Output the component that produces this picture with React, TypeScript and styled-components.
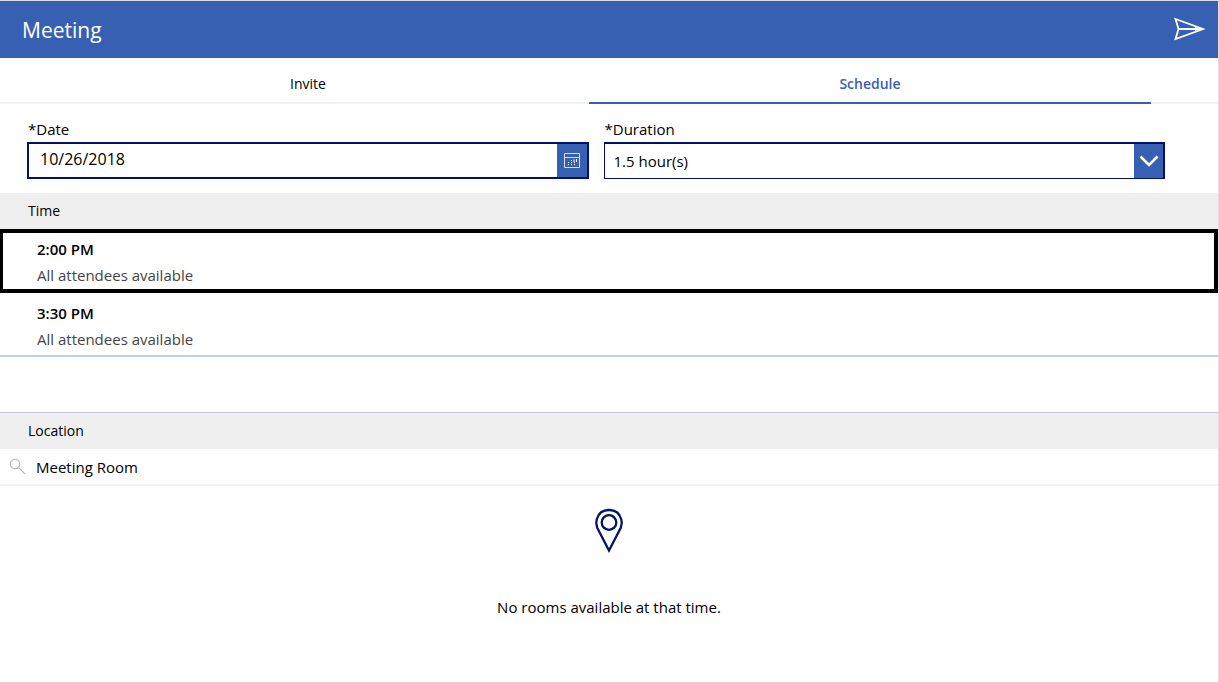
import React, { useState } from 'react';
import styled, { createGlobalStyle } from 'styled-components';

const blue = '#3860b2';
const navy = '#00126b';
const pale = '#efefef';

const GlobalStyle = createGlobalStyle`
  * { box-sizing: border-box; }
  body {
    margin: 0;
    background: #fff;
    color: #000;
    font: 14px/20px "Open Sans", "Noto Sans", sans-serif;
  }
  button, input, select { font: inherit; color: inherit; margin: 0; }
`;

const Screen = styled.main`
  min-height: 100vh;
  border-top: 1px solid #dedede;
  border-right: 1px solid #dedede;
`;

const Header = styled.header`
  display: flex;
  align-items: center;
  justify-content: space-between;
  height: 57px;
  padding: 0 12px 2px 22px;
  background: ${blue};
  color: #fff;
`;

const Title = styled.h1`
  margin: 0;
  font-size: 21px;
  line-height: 28px;
  font-weight: 400;
  padding-top: 2px;
`;

const IconButton = styled.button`
  display: flex;
  padding: 0;
  border: 0;
  background: none;
  color: #fff;
  cursor: pointer;
`;

const Tabs = styled.div`
  display: grid;
  grid-template-columns: 1fr 1fr;
  height: 46px;
  padding: 0 67px 0 27px;
  box-shadow: inset 0 -2px #f2f2f2;
`;

const Tab = styled.button<{ $active: boolean }>`
  padding: 8px 0 0;
  border: 0;
  border-bottom: 2px solid ${p => (p.$active ? blue : 'transparent')};
  background: none;
  color: ${p => (p.$active ? blue : '#000')};
  font-weight: ${p => (p.$active ? 600 : 400)};
  cursor: pointer;
`;

const Fields = styled.div`
  display: grid;
  grid-template-columns: 1fr 1fr;
  gap: 15px;
  padding: 15px 53px 14px 27px;
`;

const Field = styled.div`
  display: flex;
  flex-direction: column;
  gap: 3px;
`;

const Label = styled.label`
  padding-left: 1px;
  font-size: 15px;
`;

const Control = styled.div<{ $thin?: boolean }>`
  display: flex;
  height: 37px;
  border: 2px solid ${navy};
  border-width: ${p => (p.$thin ? '2px 2px 1px 1px' : '2px')};
`;

const DateInput = styled.input`
  flex: 1;
  min-width: 0;
  padding: 0 11px 4px;
  border: 0;
  outline: 0;
  font-size: 16px;
`;

const CalendarButton = styled(IconButton)`
  width: 30px;
  align-items: center;
  justify-content: center;
  background: ${blue};
`;

const SelectBox = styled.div`
  display: grid;
  flex: 1;
  grid-template-columns: 1fr 29px;
`;

const Select = styled.select`
  grid-area: 1 / 1 / 2 / 3;
  padding: 0 40px 0 9px;
  border: 0;
  outline: 0;
  appearance: none;
  background: transparent;
  font-size: 15px;
`;

const Arrow = styled.span`
  display: flex;
  grid-area: 1 / 2;
  align-items: center;
  justify-content: center;
  background: ${blue};
  pointer-events: none;
`;

const SectionTitle = styled.h2<{ $ruled?: boolean }>`
  margin: 0;
  padding: 8px 28px;
  border-top: ${p => (p.$ruled ? '1px solid #c5c5dc' : '0')};
  background: ${pale};
  font-size: 14px;
  font-weight: 400;
`;

const Times = styled.div`
  min-height: 183px;
`;

const Slot = styled.button<{ $selected: boolean }>`
  display: flex;
  flex-direction: column;
  justify-content: center;
  gap: 6px;
  width: 100%;
  height: 64px;
  padding: 2px 34px 0;
  border: solid ${p => (p.$selected ? '#000' : 'transparent')};
  border-width: 4px 4px 4px 3px;
  background: #fff;
  font-size: 15px;
  text-align: left;
  cursor: pointer;
`;

const SlotItem = styled.div`
  & + & { border-bottom: 2px solid #c0cfe6; height: 64px; overflow: hidden; }
`;

const SlotTime = styled.span`
  font-weight: 600;
`;

const SlotNote = styled.span`
  color: #444;
`;

const SearchBar = styled.label`
  display: flex;
  align-items: center;
  gap: 10px;
  height: 37px;
  padding-left: 9px;
  border-bottom: 2px solid #f2f2f2;
`;

const SearchInput = styled.input`
  flex: 1;
  padding: 0;
  border: 0;
  outline: 0;
  font-size: 15px;
`;

const Empty = styled.section`
  display: flex;
  flex-direction: column;
  align-items: center;
  gap: 43px;
  padding: 22px 0;
`;

const EmptyText = styled.p`
  margin: 0;
  font-size: 15px;
`;

const SendIcon = () => (
  <svg width="33" height="24" viewBox="0 0 33 24" fill="none" stroke="currentColor" strokeWidth="1.8">
    <path d="M2.500 2 30 12 2.500 22 5.500 12Z M5.500 12H30" />
    <path d="M22 10 31 12 22 14Z" fill="currentColor" stroke="none" />
  </svg>
);

const CalendarIcon = () => (
  <svg width="16" height="15" viewBox="0 0 16 15" fill="none" stroke="#d5dff2">
    <path d="M.5 .5H15.5V14.5H.5Z M.5 4.5H15.5" />
    <path d="M7 7.5H8 M10 6.500V9 M12.500 6V9 M4 9.5H5 M7 9.5H8 M10 9.5H11 M4 11.5H5 M7 11.5H8 M10 11.5H11" stroke="#fff" />
  </svg>
);

const ChevronIcon = () => (
  <svg width="20" height="12" viewBox="0 0 20 12" fill="none" stroke="#fff" strokeWidth="2.6">
    <path d="M1.5 1.5 10 10 18.5 1.5" />
  </svg>
);

const SearchIcon = () => (
  <svg width="17" height="17" viewBox="0 0 17 17" fill="none" stroke="#bdbdbd" strokeWidth="1.2">
    <circle cx="6" cy="6" r="4.8" />
    <path d="M9.3 9.300 16 16" />
  </svg>
);

const PinIcon = () => (
  <svg width="30" height="46" viewBox="0 0 30 46" fill="none" stroke={navy} strokeWidth="2.3">
    <path d="M15 42.500 3.200 19.800C2 17 2 13.500 2.800 11.200 4.400 5.300 9 2 15 2S25.600 5.300 27.200 11.200C28 13.500 28 17 26.800 19.800Z" />
    <circle cx="15" cy="14.500" r="7.300" />
  </svg>
);

const slots = ['2:00 PM', '3:30 PM'];

export default function App() {
  const [tab, setTab] = useState('Schedule');
  const [slot, setSlot] = useState(slots[0]);
  const [date, setDate] = useState('10/26/2018');
  const [room, setRoom] = useState('Meeting Room');

  return (
    <>
      <GlobalStyle />
      <Screen>
        <Header>
          <Title>Meeting</Title>
          <IconButton aria-label="Send"><SendIcon /></IconButton>
        </Header>
        <Tabs role="tablist">
          {['Invite', 'Schedule'].map(name => (
            <Tab key={name} role="tab" aria-selected={tab === name} $active={tab === name} onClick={() => setTab(name)}>
              {name}
            </Tab>
          ))}
        </Tabs>
        <Fields>
          <Field>
            <Label htmlFor="date">*Date</Label>
            <Control>
              <DateInput id="date" value={date} onChange={e => setDate(e.target.value)} />
              <CalendarButton aria-label="Open calendar"><CalendarIcon /></CalendarButton>
            </Control>
          </Field>
          <Field>
            <Label htmlFor="duration">*Duration</Label>
            <Control $thin>
              <SelectBox>
                <Arrow><ChevronIcon /></Arrow>
                <Select id="duration" defaultValue="1.5">
                  <option value="1.5">1.5 hour(s)</option>
                </Select>
              </SelectBox>
            </Control>
          </Field>
        </Fields>
        <SectionTitle>Time</SectionTitle>
        <Times>
          {slots.map(time => (
            <SlotItem key={time}>
              <Slot $selected={slot === time} aria-pressed={slot === time} onClick={() => setSlot(time)}>
                <SlotTime>{time}</SlotTime>
                <SlotNote>All attendees available</SlotNote>
              </Slot>
            </SlotItem>
          ))}
        </Times>
        <SectionTitle $ruled>Location</SectionTitle>
        <SearchBar>
          <SearchIcon />
          <SearchInput aria-label="Search rooms" value={room} onChange={e => setRoom(e.target.value)} />
        </SearchBar>
        <Empty>
          <PinIcon />
          <EmptyText>No rooms available at that time.</EmptyText>
        </Empty>
      </Screen>
    </>
  );
}
